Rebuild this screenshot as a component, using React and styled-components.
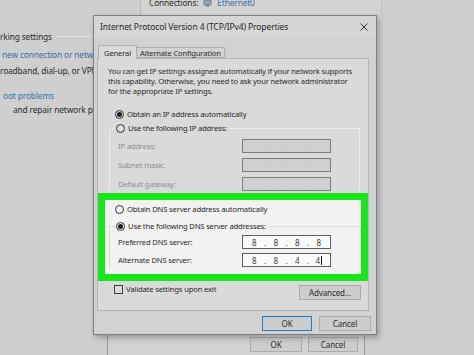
import styled, { createGlobalStyle } from "styled-components";

const GlobalStyle = createGlobalStyle`
  body {
    margin: 0;
    background: #cfcfcf;
    font-family: "Noto Sans", "Open Sans", sans-serif;
  }
`;

const Desktop = styled.div`
  position: relative;
  width: 474px;
  height: 355px;
  overflow: hidden;
  background: #cfcfcf;
  color: #2b2b2b;
  font-size: 7.6px;
  letter-spacing: -0.15px;
`;

/* windows behind the dialog */
const SettingsWindow = styled.div`
  position: absolute;
  left: 0;
  top: 0;
  width: 140px;
  height: 130px;
  display: flex;
  flex-direction: column;
  font-size: 8.4px;
  padding-top: 30px;
  box-sizing: border-box;
`;

const SideLine = styled.div`
  display: flex;
  align-items: center;
  gap: 4px;
  height: 12px;
  white-space: nowrap;
  padding-left: ${(p) => p.$indent || 0}px;
  margin-top: ${(p) => p.$space || 0}px;
  color: ${(p) => (p.$link ? "#3a6cae" : "#2b2b2b")};
`;

const Rule = styled.span`
  flex: 1;
  height: 1px;
  background: #e2e2e2;
`;

const StatusWindow = styled.div`
  position: absolute;
  left: 140px;
  top: -10px;
  width: 242px;
  height: 25px;
  border-left: 1px solid #b8b8b8;
  border-right: 1px solid #c0c0c0;
  background: #d3d3d3;
  display: flex;
  align-items: center;
  gap: 5px;
  padding-left: 8px;
  font-size: 8.4px;
  box-sizing: border-box;
`;

const Link = styled.span`
  color: #3a6cae;
`;

const PropsWindow = styled.div`
  position: absolute;
  left: 107px;
  top: 320px;
  width: 258px;
  height: 40px;
  border-left: 1px solid #9a9a9a;
  border-right: 1px solid #9a9a9a;
  background: #d3d3d3;
  display: flex;
  justify-content: flex-end;
  align-items: flex-start;
  gap: 6px;
  padding: 17px 6px 0 0;
  box-sizing: border-box;
`;

/* dialog */
const Dialog = styled.div`
  position: absolute;
  left: 93px;
  top: 15px;
  width: 284px;
  height: 320px;
  box-sizing: border-box;
  border: 1px solid #7e7e7e;
  background: #d2d2d2;
  box-shadow: 2px 3px 6px rgba(0, 0, 0, 0.28);
  display: flex;
  flex-direction: column;
`;

const TitleBar = styled.div`
  height: 21px;
  display: flex;
  align-items: center;
  justify-content: space-between;
  padding: 0 8px 0 6px;
  background: #d6d6d6;
  font-size: 8.6px;
  color: #262626;
`;

const TabStrip = styled.div`
  height: 21px;
  display: flex;
  align-items: flex-end;
  padding-left: 4px;
`;

const Tab = styled.div`
  height: ${(p) => (p.$active ? 14 : 11)}px;
  padding: 0 ${(p) => (p.$active ? 5 : 3)}px;
  display: flex;
  align-items: center;
  box-sizing: border-box;
  border: 1px solid #adadad;
  border-bottom: ${(p) => (p.$active ? "none" : "1px solid #adadad")};
  border-left: ${(p) => (p.$active ? "1px solid #adadad" : "none")};
  background: ${(p) => (p.$active ? "#dadada" : "#d2d2d2")};
  margin-bottom: ${(p) => (p.$active ? -1 : 0)}px;
  position: relative;
  z-index: 1;
`;

const Panel = styled.div`
  height: 253px;
  margin: 0 7px 0 3px;
  box-sizing: border-box;
  border: 1px solid #b4b4b4;
  background: #dadada;
  display: flex;
  flex-direction: column;
`;

const Description = styled.p`
  margin: 7px 0 0 10px;
  line-height: 10px;
  white-space: pre-line;
`;

const Option = styled.label`
  display: flex;
  align-items: center;
  gap: 3px;
  height: 10px;
  margin: ${(p) => p.$margin || "0"};
  white-space: nowrap;
  color: #262626;
`;

const Radio = styled.span`
  width: 9px;
  height: 9px;
  box-sizing: border-box;
  border: 1px solid #333;
  border-radius: 50%;
  display: flex;
  align-items: center;
  justify-content: center;
  background: transparent;

  &::after {
    content: "";
    width: 5px;
    height: 5px;
    border-radius: 50%;
    background: ${(p) => (p.$checked ? "#1e1e1e" : "transparent")};
  }
`;

const Check = styled.span`
  width: 9px;
  height: 9px;
  box-sizing: border-box;
  border: 1px solid #3a3a3a;
  background: #dcdcdc;
`;

const Group = styled.fieldset`
  margin: ${(p) => p.$margin || "0"};
  padding: ${(p) => p.$top}px 0 0 8px;
  border: 1px solid ${(p) => p.$line};
  border-bottom: none;
  min-width: 0;
  display: grid;
  grid-template-columns: 124px 89px;
  grid-auto-rows: 14px;
  row-gap: ${(p) => p.$rowGap}px;
  align-items: center;

  & > legend {
    padding: 0 2px 0 0;
    margin-left: -2px;
  }
`;

const FieldLabel = styled.span`
  color: ${(p) => (p.$disabled ? "#8d8d8d" : "#2b2b2b")};
  white-space: nowrap;
`;

const IpField = styled.div`
  height: 14px;
  box-sizing: border-box;
  border: 1px solid ${(p) => (p.$disabled ? "#7c7c7c" : "#5e5e5e")};
  background: ${(p) => (p.$disabled ? "#d0d0d0" : "#fbfbfb")};
  display: grid;
  grid-template-columns: 1fr 3px 1fr 3px 1fr 3px 1fr;
  padding: 0 2px;
  align-items: center;
  justify-items: center;
  color: ${(p) => (p.$disabled ? "#8d8d8d" : "#3a3a3a")};
  font-size: ${(p) => (p.$disabled ? 6 : 8)}px;
`;

const Octet = styled.span`
  display: flex;
  align-items: center;
`;

const Caret = styled.span`
  width: 1px;
  height: 9px;
  margin-left: 1px;
  background: #111;
`;

const Highlight = styled.div`
  margin-top: 2px;
  height: 88px;
  box-sizing: border-box;
  border: 7px solid #19e41c;
  background: #f2f2f2;
  display: flex;
  flex-direction: column;
`;

const BottomRow = styled.div`
  display: flex;
  justify-content: space-between;
  align-items: flex-start;
  margin: 3px 7px 0 16px;
`;

const Button = styled.button`
  width: ${(p) => p.$width || 51}px;
  height: 15px;
  margin-top: ${(p) => p.$offset || 0}px;
  padding: 0;
  box-sizing: border-box;
  border: ${(p) => (p.$focus ? "1.5px solid #2f76b6" : "1px solid #acacac")};
  background: #cdcdcd;
  font-family: inherit;
  font-size: 8px;
  letter-spacing: -0.1px;
  color: #2b2b2b;
`;

const Footer = styled.div`
  flex: 1;
  display: flex;
  justify-content: flex-end;
  align-items: flex-start;
  gap: 7px;
  padding: 5px 5px 0 0;
`;

const ipRows = ["IP address:", "Subnet mask:", "Default gateway:"];
const dnsRows = [
  { label: "Preferred DNS server:", octets: ["8", "8", "8", "8"] },
  { label: "Alternate DNS server:", octets: ["8", "8", "4", "4"], caret: true },
];

function Address({ octets, disabled, caret }) {
  const parts = octets || ["", "", "", ""];
  return (
    <IpField $disabled={disabled}>
      {parts.flatMap((o, i) => {
        const cells = [
          <Octet key={"o" + i}>
            {o}
            {caret && i === 3 && <Caret />}
          </Octet>,
        ];
        if (i < 3) cells.push(<span key={"d" + i}>.</span>);
        return cells;
      })}
    </IpField>
  );
}

function CloseIcon() {
  return (
    <svg width="8" height="8" viewBox="0 0 8 8">
      <path d="M0.5 0.5 L7.5 7.5 M7.5 0.5 L0.5 7.5" stroke="#333" strokeWidth="1" />
    </svg>
  );
}

function NetIcon() {
  return (
    <svg width="9" height="8" viewBox="0 0 9 8">
      <rect x="1" y="1" width="7" height="5" fill="#9aa4ad" stroke="#6b7680" strokeWidth="0.8" />
      <rect x="3" y="6" width="3" height="1.5" fill="#6b7680" />
    </svg>
  );
}

export default function App() {
  return (
    <Desktop>
      <GlobalStyle />

      <SettingsWindow>
        <SideLine>
          rking settings <Rule />
        </SideLine>
        <SideLine $link $space={6} $indent={2}>
          new connection or network
        </SideLine>
        <SideLine $space={4}>roadband, dial-up, or VPN connection</SideLine>
        <SideLine $link $space={13} $indent={3}>
          oot problems
        </SideLine>
        <SideLine $space={2} $indent={13}>
          and repair network problems
        </SideLine>
      </SettingsWindow>

      <StatusWindow>
        Connections: <NetIcon /> <Link>Ethernet0</Link>
      </StatusWindow>

      <PropsWindow>
        <Button $width={52}>OK</Button>
        <Button $width={50}>Cancel</Button>
      </PropsWindow>

      <Dialog>
        <TitleBar>
          Internet Protocol Version 4 (TCP/IPv4) Properties
          <CloseIcon />
        </TitleBar>

        <TabStrip>
          <Tab $active>General</Tab>
          <Tab>Alternate Configuration</Tab>
        </TabStrip>

        <Panel>
          <Description>
            {"You can get IP settings assigned automatically if your network supports\nthis capability. Otherwise, you need to ask your network administrator\nfor the appropriate IP settings."}
          </Description>

          <Option $margin="13px 0 0 17px">
            <Radio $checked /> Obtain an IP address automatically
          </Option>

          <Group $margin="4px 8px 0 11px" $line="#ececec" $rowGap={5} $top={6}>
            <legend>
              <Option>
                <Radio /> Use the following IP address:
              </Option>
            </legend>
            {ipRows.flatMap((label) => [
              <FieldLabel key={label} $disabled>
                {label}
              </FieldLabel>,
              <Address key={label + "f"} disabled />,
            ])}
          </Group>

          <Highlight>
            <Option $margin="4px 0 0 10px">
              <Radio /> Obtain DNS server address automatically
            </Option>
            <Group $margin="7px 0 0 4px" $line="#d9d9d9" $rowGap={4} $top={4}>
              <legend>
                <Option>
                  <Radio $checked /> Use the following DNS server addresses:
                </Option>
              </legend>
              {dnsRows.flatMap((row) => [
                <FieldLabel key={row.label}>{row.label}</FieldLabel>,
                <Address key={row.label + "f"} octets={row.octets} caret={row.caret} />,
              ])}
            </Group>
          </Highlight>

          <BottomRow>
            <Option>
              <Check /> Validate settings upon exit
            </Option>
            <Button $width={62} $offset={1}>
              Advanced...
            </Button>
          </BottomRow>
        </Panel>

        <Footer>
          <Button $focus $width={50}>
            OK
          </Button>
          <Button $width={52}>Cancel</Button>
        </Footer>
      </Dialog>
    </Desktop>
  );
}
